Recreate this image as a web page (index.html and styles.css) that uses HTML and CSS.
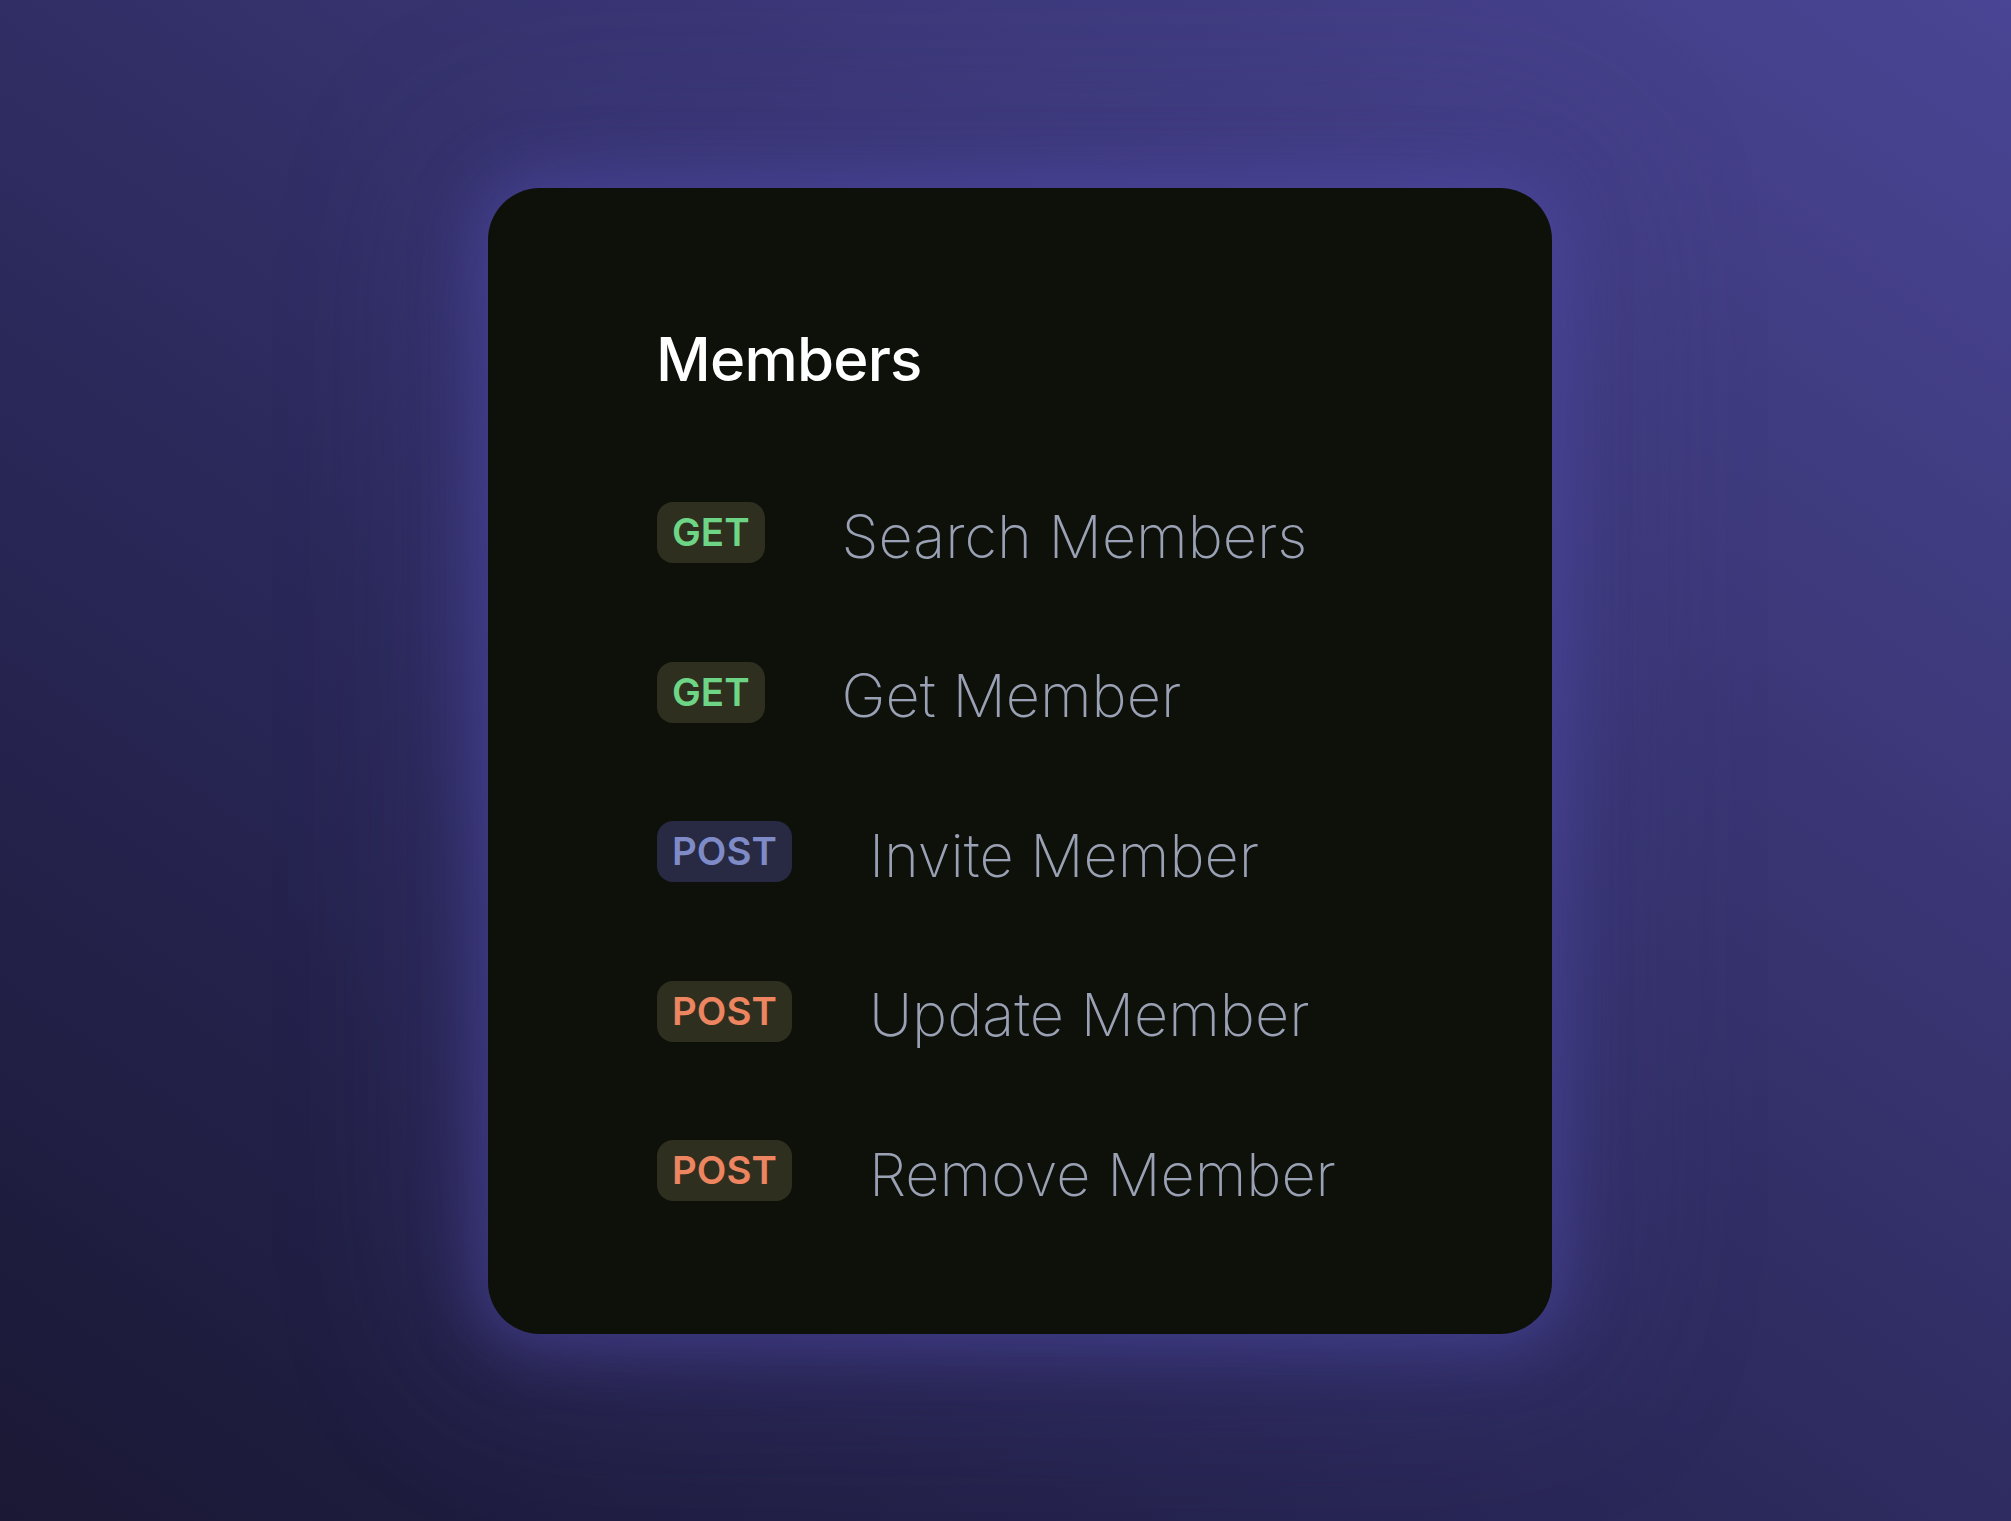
FILE: index.html
```html
<!DOCTYPE html>
<html lang="en">
<head>
<meta charset="utf-8">
<title>Members</title>
<link rel="stylesheet" href="styles.css">
</head>
<body>
<main class="stage">
  <section class="card">
    <h1 class="title">Members</h1>
    <ul class="endpoints">
      <li class="endpoint"><span class="badge badge-get">GET</span><span class="name">Search Members</span></li>
      <li class="endpoint"><span class="badge badge-get">GET</span><span class="name">Get Member</span></li>
      <li class="endpoint"><span class="badge badge-post-blue">POST</span><span class="name">Invite Member</span></li>
      <li class="endpoint"><span class="badge badge-post">POST</span><span class="name">Update Member</span></li>
      <li class="endpoint"><span class="badge badge-post">POST</span><span class="name">Remove Member</span></li>
    </ul>
  </section>
</main>
</body>
</html>
```
FILE: styles.css
```css
* { box-sizing: border-box; }
html, body { margin: 0; padding: 0; }
body {
  width: 2011px;
  height: 1521px;
  overflow: hidden;
  font-family: Inter, "Noto Sans", sans-serif;
  background:
    radial-gradient(ellipse 900px 700px at 1020px 640px, rgba(78, 72, 160, 0.55), rgba(78, 72, 160, 0) 70%),
    linear-gradient(215deg, #4a4594 0%, #3b3777 30%, #2a2859 60%, #1a1834 100%);
}
.stage {
  padding: 188px 0 0 488px;
}
.card {
  width: 1064px;
  height: 1146px;
  background: #0e110a;
  border-radius: 52px;
  padding: 141px 0 0 169px;
  box-shadow: 0 0 60px 10px rgba(80, 74, 170, 0.55), 0 0 160px 40px rgba(74, 68, 150, 0.35);
}
.title {
  margin: 0 0 113px -1px;
  font-size: 60px;
  line-height: 60px;
  font-weight: 500;
  color: #ffffff;
  letter-spacing: -0.8px;
}
.endpoints {
  list-style: none;
  margin: 0;
  padding: 0;
  display: flex;
  flex-direction: column;
  gap: 98.5px;
}
.endpoint {
  display: flex;
  align-items: center;
  gap: 77px;
  height: 61px;
}
.badge {
  display: inline-block;
  height: 61px;
  line-height: 61px;
  padding: 0 15px;
  border-radius: 16px;
  font-size: 38.5px;
  font-weight: 600;
}
.badge-get { background: #2e2f1f; color: #6ed486; }
.badge-post-blue { background: #282942; color: #7e8bc7; }
.badge-post { background: #2e2f1f; color: #ec8560; }
.name {
  font-size: 59.4px;
  line-height: 58px;
  padding-top: 6px;
  font-weight: 200;
  color: #9ba1b5;
}
```
